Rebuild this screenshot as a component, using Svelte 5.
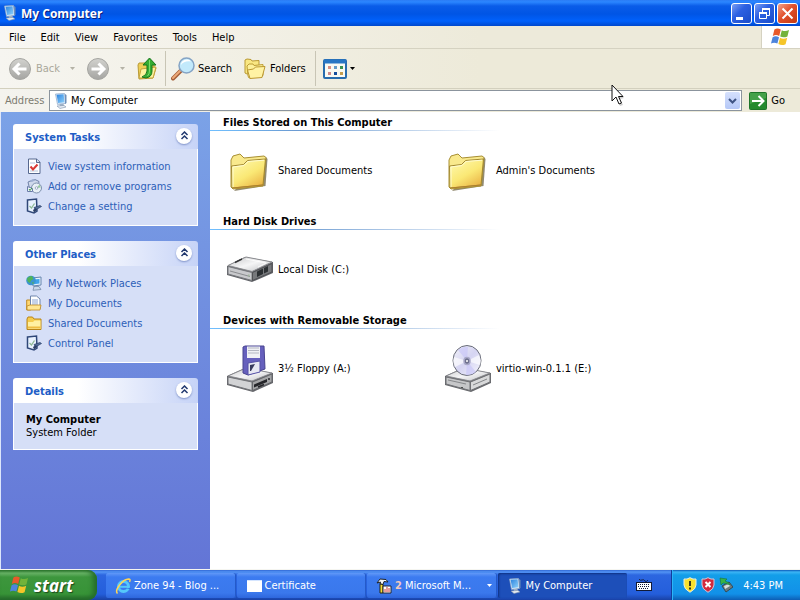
<script lang="ts">
	const menus = ['File', 'Edit', 'View', 'Favorites', 'Tools', 'Help'];

	const panels = [
		{
			title: 'System Tasks',
			links: [
				{ icon: 'info', label: 'View system information' },
				{ icon: 'programs', label: 'Add or remove programs' },
				{ icon: 'settings', label: 'Change a setting' }
			]
		},
		{
			title: 'Other Places',
			links: [
				{ icon: 'network', label: 'My Network Places' },
				{ icon: 'documents', label: 'My Documents' },
				{ icon: 'folder', label: 'Shared Documents' },
				{ icon: 'settings', label: 'Control Panel' }
			]
		},
		{ title: 'Details', links: [] }
	];

	const groups = [
		{
			title: 'Files Stored on This Computer',
			items: [
				{ icon: 'bigfolder', label: 'Shared Documents' },
				{ icon: 'bigfolder', label: "Admin's Documents" }
			]
		},
		{
			title: 'Hard Disk Drives',
			items: [{ icon: 'disk', label: 'Local Disk (C:)' }]
		},
		{
			title: 'Devices with Removable Storage',
			items: [
				{ icon: 'floppy', label: '3½ Floppy (A:)' },
				{ icon: 'cd', label: 'virtio-win-0.1.1 (E:)' }
			]
		}
	];

	const tasks = [
		{ icon: 'ie', label: 'Zone 94 - Blog ...' },
		{ icon: 'window', label: 'Certificate' },
		{ icon: 'tools', label: 'Microsoft M...', count: 2 },
		{ icon: 'computer', label: 'My Computer', active: true }
	];

	let address = $state('My Computer');
	let collapsed: Record<string, boolean> = $state({});

	const toggle = (title: string) => {
		collapsed[title] = !collapsed[title];
	};
</script>

{#snippet flag(size: number)}
	<svg width={size} height={size} viewBox="0 0 20 20" aria-hidden="true">
		<path d="M3.4 2.6q3-2 6.4 0L8.2 9q-3.2-1.8-6.4 0z" fill="#e8592a" />
		<path d="M10.8 3.2q3.4 1.8 7.2-.2L16.4 9.4q-3.6 1.8-7.2.2z" fill="#72b33a" />
		<path d="M1.6 10.2q3-1.8 6.4 0L6.4 16.6q-3.2-1.6-6.4 0z" fill="#4d84dc" />
		<path d="M9 10.8q3.4 1.8 7.2 0L14.6 17.2q-3.8 1.8-7.2-.2z" fill="#f5c529" />
	</svg>
{/snippet}

{#snippet icon16(name: string)}
	<svg class="icon16" width="16" height="16" viewBox="0 0 16 16" aria-hidden="true">
		{#if name === 'computer'}
			<path d="M2.5 1l9-.6 1 10-8 1z" fill="#dcebfa" stroke="#8ba5c6" stroke-width=".7" />
			<path d="M3.6 1.8l7-.5.8 8-6.300.8z" fill="url(#screen)" />
			<path d="M12 1l1.5 1v8L12 11z" fill="#6f8fb9" />
			<path d="M6.5 11h4l.5 2h-4z" fill="#9fb2c8" />
			<path d="M4 13l7-.6 2 1.6-6 1.5z" fill="#e6ecf3" stroke="#7d92ad" stroke-width=".6" />
		{:else if name === 'info'}
			<path d="M2.5 1h8L14 4v11.5H2.5z" fill="#fff" stroke="#56688f" />
			<path d="M10.5 1v3.5H14" fill="#d6e0f0" stroke="#56688f" />
			<path d="M4 5h5M4 13h8" stroke="#b7c5dd" />
			<path d="M4.5 8.5l2.5 3 4.500-5" fill="none" stroke="#d93a35" stroke-width="2" />
		{:else if name === 'programs'}
			<path d="M2 4l7-2.5 4 2-1 7-8 2z" fill="#cfd9ec" stroke="#7182a8" />
			<path d="M3 3l4-2 3 1-4 2z" fill="#9fb0d2" />
			<circle cx="10.5" cy="10" r="5" fill="#e8f0f6" stroke="#7d90ad" />
			<path d="M10.5 10l3-3.5 1.2 3z" fill="#96c9a0" />
			<circle cx="10.5" cy="10" r="1.3" fill="#fff" stroke="#7182a8" stroke-width=".6" />
			<path d="M1.5 8.5v5h5v-3z" fill="#eef3fb" stroke="#6a7ca8" />
			<path d="M3 11l1 1.5 2-2.5" fill="none" stroke="#399846" />
		{:else if name === 'settings'}
			<path d="M1.5 2l9-1 .5 12-3 2-6.5-2z" fill="#e9f2ff" stroke="#2f4778" stroke-width="1.5" />
			<path d="M3.5 8l2 2 3-4.500" fill="none" stroke="#8fba95" stroke-width="1.3" />
			<path d="M8 9.5l6-2 1.500 1-6 3.500z" fill="#567099" stroke="#263c68" stroke-width=".7" />
			<path d="M7 12l3-2 1 2-3 2.5z" fill="#2c3f66" />
		{:else if name === 'network'}
			<path d="M6 3l9-1v8l-8 1z" fill="#e5f1fc" stroke="#6785ad" />
			<path d="M7.5 4.5l6-.6v4.700l-5.500.7z" fill="#40a4eb" />
			<circle cx="5" cy="5.5" r="4.8" fill="#3c94d0" />
			<path d="M1 3.5q2-3 5-2.500l1.500 3L5 5.500 4 8Q1 7 1 3.500zM6 7l2 .5-1 2z" fill="#50b35a" />
			<path d="M8 11.5h5l2 3-8 .8z" fill="#cad8ea" stroke="#6b819f" stroke-width=".7" />
		{:else if name === 'documents'}
			<path d="M.7 5h4v10h-4z" fill="#ffd772" stroke="#c08a22" />
			<path d="M4.5 1h6L14 4v10H4.5z" fill="#fff" stroke="#6f85ad" />
			<path d="M6 5h6M6 7h6M6 9h6" stroke="#8aa4d5" />
			<path d="M1 14.5V11l3-1h11l-1 5H2z" fill="#ffe693" stroke="#c08a22" stroke-width=".8" />
		{:else if name === 'folder'}
			<path d="M1 4l1-2h4.5L8 4h7v10.5H1z" fill="#f5cc4e" stroke="#b98518" />
			<path d="M2 7h5l1.5-1.500h6V14H2z" fill="#fff0a1" />
			<path d="M2 12.5h12.500" stroke="#eebd43" stroke-width="2" />
		{:else if name === 'ie'}
			<circle cx="8.5" cy="8.5" r="5" fill="none" stroke="#55c8fa" stroke-width="3" />
			<path d="M5 8.8h8.500" stroke="#55c8fa" stroke-width="2" />
			<path d="M9.5 11h6v-1z" fill="#2c6be0" />
			<path d="M2.5 15.5C-1 12 8 1 13.500.9q2.500.1 1 3" fill="none" stroke="#ffd557" stroke-width="1.5" />
		{:else if name === 'window'}
			<path d="M1 2h15v12H1z" fill="#fff" />
			<path d="M1 2h15v1H1z" fill="#d5e5ff" />
		{:else if name === 'tools'}
			<path d="M1 5l3-4 6 .5 2 2.500-4-.5-1 3-3-.5.500-2z" fill="#f5f5f5" stroke="#1d222a" />
			<path d="M4 6l3 .5V15H4z" fill="#f7dd32" stroke="#242216" />
			<path d="M7 8h8v7H7z" fill="#fff" stroke="#22242c" />
			<path d="M9 14v-3M11 14V9M13 14v-4" stroke="#cd3a36" />
		{/if}
	</svg>
{/snippet}

{#snippet icon48(name: string)}
	<svg class="icon48" width="48" height="48" viewBox="0 0 48 48" aria-hidden="true">
		{#if name === 'bigfolder'}
			<path d="M40 10l1.500 2-2 27L8 44z" fill="#6e6340" opacity=".75" />
			<path d="M5 40V13l2-4 7-2 4 4 20-2 2 1.500L37 39 7 42z" fill="#f9e98d" stroke="#a88f33" />
			<path d="M6 41l-.5-22 12-1.500 4-4 18-1.500-2.500 26z" fill="url(#folder)" stroke="#a28832" />
			<path d="M7 40V20l11-1.500 4-4 16-1.300" fill="none" stroke="#fffbd0" />
			<path d="M7 41l30-3" stroke="#b0802c" />
		{:else if name === 'disk'}
			<path d="M1 20l18-9 28 5v11L26 36 1 29z" fill="#63656a" />
			<path d="M2 19.5L20 11l26 5-20 9.500z" fill="url(#metal)" stroke="#8b8c90" />
			<path d="M2 20.5l24 6v8L2 28z" fill="#c8c9cc" stroke="#77797d" />
			<path d="M26.5 26.500L46 17.500v8.500l-19.500 8.500z" fill="#77797c" stroke="#505155" />
			<path d="M31 25.500l6-3v5.500l-6 3zM38 22l4-2v5.500l-4 2z" fill="#2c3033" />
			<path d="M9 16.500l7-3.500" stroke="#353638" stroke-width="1.500" />
			<path d="M4 25l20 5.500" stroke="#8a8c8f" />
			<path d="M22 29.500h1.500" stroke="#9fb59c" stroke-width="2" />
			<path d="M20 13l20 4-8 4" fill="none" stroke="#fff" opacity=".8" />
		{:else if name === 'floppy'}
			<path d="M1 31l18-8 28 5v10L27 47 1 40z" fill="#64656a" />
			<path d="M2 31l18-8 26 5-20 8z" fill="url(#metal)" stroke="#8a8b90" />
			<path d="M2 32l24 5v8.500L2 39z" fill="#d2d3d5" stroke="#737579" />
			<path d="M26.5 37L46 29v8l-19.500 8.500z" fill="#a4a5a7" stroke="#66686c" />
			<path d="M28 39.500l13-5.500v3l-13 5.500z" fill="#25262a" />
			<path d="M32 42l6-2.500M43 33v2" stroke="#25262a" stroke-width="1.500" />
			<path d="M17 2l2-1h19l1 23-17 6-5-2z" fill="#6660bd" stroke="#49448f" />
			<path d="M21 1.500h13V13H21z" fill="#f0f1f5" />
			<path d="M22 3h11M22 5.500h11M22 8h11" stroke="#b5b8c2" />
			<path d="M22 18l12-2v11l-12 3z" fill="#e7e8f3" stroke="#5551a6" />
			<path d="M24 20l5-1-4 7h-1z" fill="#36395c" />
		{:else if name === 'cd'}
			<path d="M1 31l18-8 28 5v10L27 47 1 40z" fill="#66686c" />
			<path d="M2 31l18-8 26 5-20 8z" fill="url(#metal)" stroke="#8a8b90" />
			<path d="M2 32l24 5v8.500L2 39z" fill="#c6c7c9" stroke="#717276" />
			<path d="M26.5 37L46 29v8l-19.500 8.500z" fill="#d8d9da" stroke="#707175" />
			<path d="M4 35l18 4M29 40l14-6" stroke="#85878a" />
			<path d="M18 42v1" stroke="#4d504f" stroke-width="2" />
			<ellipse cx="23" cy="15.5" rx="14" ry="15" fill="url(#disc)" stroke="#686b77" />
			<path d="M23 16L14 5q5-4 10-3zM23 16l9 11q-5 4-10 3z" fill="#c7c4f7" opacity=".65" />
			<path d="M23 16l12-6q3 6 1 10zM23 16L11 22q-3-6-1-10z" fill="#fff" opacity=".65" />
			<ellipse cx="23" cy="16" rx="3" ry="3.5" fill="#6f718e" stroke="#a9a9c8" stroke-width="1.5" />
			<circle cx="23" cy="16" r="1" fill="#fff" />
		{/if}
	</svg>
{/snippet}

{#snippet caret(color: string)}
	<svg class="caret" width="5" height="3" viewBox="0 0 5 3" aria-hidden="true">
		<path d="M0 0h5L2.5 3z" fill={color} />
	</svg>
{/snippet}

{#snippet roundArrow(flip: boolean)}
	<svg width="24" height="24" viewBox="0 0 24 24" aria-hidden="true">
		<circle cx="12" cy="12" r="10.5" fill="url(#disabled)" stroke="#a5a5a1" />
		<path
			d={flip ? 'M5.500 12h12M12.500 6.500L18 12l-5.500 5.500' : 'M18.500 12h-12M11.500 6.500L6 12l5.500 5.500'}
			fill="none"
			stroke="#fff"
			stroke-width="3"
		/>
	</svg>
{/snippet}

<!-- Shared gradients for the icons -->
<svg class="defs" width="0" height="0" aria-hidden="true">
	<defs>
		<linearGradient id="screen" x1="0" y1="0" x2="1" y2="1">
			<stop offset="0" stop-color="#2c83df" />
			<stop offset="1" stop-color="#8fd2fb" />
		</linearGradient>
		<linearGradient id="folder" x1="0" y1="0" x2=".7" y2="1">
			<stop offset="0" stop-color="#fffbb5" />
			<stop offset=".6" stop-color="#fae875" />
			<stop offset="1" stop-color="#ebb748" />
		</linearGradient>
		<linearGradient id="metal" x1="0" y1="0" x2="1" y2="1">
			<stop offset="0" stop-color="#c5c6c8" />
			<stop offset=".5" stop-color="#f5f5f6" />
			<stop offset="1" stop-color="#bdbfc2" />
		</linearGradient>
		<linearGradient id="disc" x1="0" y1="0" x2="1" y2="1">
			<stop offset="0" stop-color="#f2f2f8" />
			<stop offset=".5" stop-color="#d5d4f2" />
			<stop offset="1" stop-color="#f5f5fc" />
		</linearGradient>
		<linearGradient id="disabled" x1="0" y1="0" x2="0" y2="1">
			<stop offset="0" stop-color="#d2d2ce" />
			<stop offset="1" stop-color="#a5a5a2" />
		</linearGradient>
	</defs>
</svg>

<div class="desktop">
	<header class="titlebar">
		{@render icon16('computer')}
		<h1>My Computer</h1>
		<div class="window-buttons">
			<button type="button" aria-label="Minimize">
				<svg width="19" height="19" viewBox="0 0 19 19"><path d="M4 13h7v3H4z" fill="#fff" /></svg>
			</button>
			<button type="button" aria-label="Restore">
				<svg width="19" height="19" viewBox="0 0 19 19" fill="none" stroke="#fff">
					<path d="M7.5 8V4.500h7v7H12" /><path d="M7 5h8" stroke-width="2" />
					<path d="M4.5 8.500h7v6h-7z" /><path d="M4 9h8" stroke-width="2" />
				</svg>
			</button>
			<button type="button" class="close" aria-label="Close">
				<svg width="19" height="19" viewBox="0 0 19 19">
					<path d="M4.5 4.500l10 10M14.500 4.500l-10 10" stroke="#fff" stroke-width="2" />
				</svg>
			</button>
		</div>
	</header>

	<nav class="menubar">
		{#each menus as menu}
			<button type="button">{menu}</button>
		{/each}
		<div class="brand">{@render flag(20)}</div>
	</nav>

	<div class="toolbar">
		<button type="button" class="nav-button" disabled>
			{@render roundArrow(false)}
			<span>Back</span>
			{@render caret('#b4b2a6')}
		</button>
		<button type="button" class="nav-button forward" disabled aria-label="Forward">
			{@render roundArrow(true)}
			{@render caret('#b4b2a6')}
		</button>
		<button type="button" class="up" aria-label="Up">
			<svg width="20" height="24" viewBox="0 0 20 24">
				<path d="M1 8l1-2h6l1 2 8-1v3l2 1-3 10-14 1z" fill="#efcf55" stroke="#b89a35" />
				<path d="M2 21l2-9 15-2-3 11z" fill="#fdf3a0" stroke="#c5a43d" />
				<path d="M5 20q5-2 5-6V8H6l6.500-7L19 8h-4v6q0 6-6 7z" fill="#35ad32" stroke="#16771b" />
				<path d="M12.5 3v11q0 3-2 5" fill="none" stroke="#80da68" />
			</svg>
		</button>
		<span class="divider"></span>
		<button type="button" class="search">
			<svg width="24" height="24" viewBox="0 0 24 24" aria-hidden="true">
				<path d="M2 21.500l8-8" stroke="#a45d37" stroke-width="4" stroke-linecap="round" />
				<path d="M2 21l7-7" stroke="#eeaa79" stroke-width="2" stroke-linecap="round" />
				<circle cx="15.5" cy="8.5" r="7.5" fill="#c2e9fb" stroke="#85a4c5" stroke-width="1.5" />
				<path d="M10 8q0-5 6-5.500 3 0 4 2-7-1-10 3.500z" fill="#fff" />
			</svg>
			<span>Search</span>
		</button>
		<button type="button" class="folders">
			<svg width="22" height="22" viewBox="0 0 22 22" aria-hidden="true">
				<path d="M1 15V2l2-1 4 .5 1 1.500 7-.5V13L3 16z" fill="#f9e782" stroke="#b99932" />
				<path d="M4 18L3 8l2-2h4l1 1.500 9-1v11L5 20z" fill="#fdf19a" stroke="#bd9e36" />
				<path d="M6 20.500L3.500 12l6-1 2-2 9.500-.5-3 11z" fill="#fff3a4" stroke="#bc9831" />
			</svg>
			<span>Folders</span>
		</button>
		<span class="divider"></span>
		<button type="button" class="views" aria-label="Views">
			<svg width="24" height="20" viewBox="0 0 24 20">
				<rect x="1" y="1" width="22" height="18" rx="1" fill="#fafaf3" stroke="#286cae" stroke-width="2" />
				<path d="M1 2.500h22" stroke="#2876c4" stroke-width="4" />
				<path d="M5 7h3v3H5z" fill="#d98e83" /><path d="M11 7h3v3h-3z" fill="#669cc9" />
				<path d="M17 7h3v3h-3z" fill="#3a9150" /><path d="M5 13h3v3H5z" fill="#ce8889" />
				<path d="M11 13h3v3h-3z" fill="#174e9d" /><path d="M17 13h3v3h-3z" fill="#c49d4e" />
			</svg>
			{@render caret('#000')}
		</button>
	</div>

	<form class="addressbar" onsubmit={(event) => event.preventDefault()}>
		<label for="address">Address</label>
		<div class="address-box">
			{@render icon16('computer')}
			<input id="address" type="text" bind:value={address} />
			<button type="button" class="drop" aria-label="Show addresses">
				<svg width="9" height="6" viewBox="0 0 9 6">
					<path d="M1 1l3.500 3.500L8 1" fill="none" stroke="#3f5483" stroke-width="2" />
				</svg>
			</button>
		</div>
		<button type="submit" class="go">
			<svg width="18" height="18" viewBox="0 0 18 18" aria-hidden="true">
				<rect x=".5" y=".5" width="17" height="17" rx="1" fill="#258a2e" stroke="#1f7529" />
				<path d="M1 1h16v5L1 12z" fill="#5cb15c" opacity=".6" />
				<path d="M3 9h11M9.500 4l5 5-5 5" fill="none" stroke="#fff" stroke-width="2" />
			</svg>
			<span>Go</span>
		</button>
	</form>

	<div class="explorer">
		<aside class="sidebar">
			{#each panels as panel}
				<section class="panel">
					<div class="panel-header">
						<h2>{panel.title}</h2>
						<button type="button" aria-label="Toggle {panel.title}" onclick={() => toggle(panel.title)}>
							<svg width="9" height="9" viewBox="0 0 9 9">
								<path
									d="M1.5 4l3-3 3 3M1.500 8l3-3 3 3"
									fill="none"
									stroke="#22396f"
									stroke-width="1.5"
								/>
							</svg>
						</button>
					</div>
					{#if !collapsed[panel.title]}
						{#if panel.links.length}
							<ul class="panel-body">
								{#each panel.links as link}
									<li>
										<a href="#{link.icon}">{@render icon16(link.icon)}<span>{link.label}</span></a>
									</li>
								{/each}
							</ul>
						{:else}
							<div class="panel-body details">
								<strong>My Computer</strong>
								<p>System Folder</p>
							</div>
						{/if}
					{/if}
				</section>
			{/each}
		</aside>

		<main class="content">
			{#each groups as group}
				<section class="group">
					<h2>{group.title}</h2>
					<div class="rule"></div>
					<div class="items">
						{#each group.items as item}
							<button type="button">{@render icon48(item.icon)}<span>{item.label}</span></button>
						{/each}
					</div>
				</section>
			{/each}
		</main>
	</div>

	<footer class="taskbar">
		<button type="button" class="start">{@render flag(20)}<span>start</span></button>
		<div class="tasks">
			{#each tasks as task}
				<button type="button" class="task" class:active={task.active}>
					{@render icon16(task.icon)}
					{#if task.count}<b>{task.count}</b>{/if}
					<span>{task.label}</span>
					{#if task.count}{@render caret('#fff')}{/if}
				</button>
			{/each}
		</div>
		<button type="button" class="keyboard" aria-label="Keyboard">
			<svg width="16" height="14" viewBox="0 0 16 14">
				<path d="M3 1q1 2 3 1t3 1 3-1" fill="none" stroke="#17254c" />
				<rect x=".5" y="4.5" width="15" height="8" fill="#fff" stroke="#111a36" />
				<path d="M2 6.500h12M2 8.500h12M3 10.500h10" stroke="#111a36" stroke-dasharray="1 1" />
			</svg>
		</button>
		<div class="tray">
			<svg width="14" height="16" viewBox="0 0 14 16" aria-hidden="true">
				<path d="M7 .7q3 2 6 1.300v6q0 4-6 7.300Q1 12 1 8V2q3 .7 6-1.300z" fill="#fae12e" stroke="#e9eee4" />
				<path d="M7 4v5M7 10.500v2" stroke="#3c391b" stroke-width="2" />
			</svg>
			<svg width="14" height="16" viewBox="0 0 14 16" aria-hidden="true">
				<path d="M7 .7q3 2 6 1.300v6q0 4-6 7.300Q1 12 1 8V2q3 .7 6-1.300z" fill="#d2293d" stroke="#cfc8dc" />
				<path d="M4.5 5l5 5M9.500 5l-5 5" stroke="#fff" stroke-width="2" />
			</svg>
			<svg width="14" height="16" viewBox="0 0 14 16" aria-hidden="true">
				<path d="M3 9l7-4 4 5-7 5z" fill="#707b7c" stroke="#344a56" />
				<path d="M5 9l5-2 1 2-5 3z" fill="#d9dfdb" />
				<path d="M1 1l7 1-2 2q4 1 5 4-4-2-7-2L2 8z" fill="#38b346" stroke="#18743b" stroke-width=".6" />
			</svg>
			<time>4:43 PM</time>
		</div>
	</footer>

	<svg class="pointer" width="14" height="23" viewBox="0 0 14 23" aria-hidden="true">
		<path d="M3 4l10 10-4 1 3 6-3 1z" fill="#777" opacity=".35" />
		<path d="M1 1v16l4-4 3 7 2.500-1-3-6.500H12z" fill="#fff" stroke="#111" />
	</svg>
</div>

<style>
	:global(body) {
		margin: 0;
	}

	.desktop {
		position: relative;
		display: flex;
		flex-direction: column;
		min-height: 100vh;
		background: #fff;
		color: #000;
		font-family: 'DejaVu Sans Condensed', 'DejaVu Sans', sans-serif;
		font-size: 11px;
		line-height: 13px;
	}

	.defs {
		position: absolute;
	}

	svg {
		display: block;
		flex: none;
	}

	button,
	input {
		margin: 0;
		padding: 0;
		border: 0;
		background: none;
		color: inherit;
		font: inherit;
	}

	button {
		display: flex;
		align-items: center;
		white-space: nowrap;
	}

	h1,
	h2,
	p,
	ul {
		margin: 0;
		padding: 0;
		font-size: 11px;
	}

	/* Title bar */
	.titlebar {
		display: flex;
		align-items: center;
		gap: 3px;
		box-sizing: border-box;
		height: 26px;
		padding: 0 2px;
		background: linear-gradient(#2c7cf5 0, #2b86ff 2px, #0a5ce8 6px, #0055e5 14px, #0061fc 21px, #0048cc 26px);
	}

	.titlebar h1 {
		flex: 1;
		color: #fff;
		font-family: 'Open Sans', sans-serif;
		font-size: 12px;
		text-shadow: 1px 1px #0a1f7b;
	}

	.window-buttons {
		display: flex;
		gap: 2px;
	}

	.window-buttons button {
		box-sizing: border-box;
		width: 21px;
		height: 21px;
		border: 1px solid #fff;
		border-radius: 3px;
		background: linear-gradient(135deg, #7c9ff4, #2d61e2 40%, #1a4cc9);
	}

	.window-buttons .close {
		background: linear-gradient(135deg, #f0a28b, #e2502b 45%, #c23a12);
	}

	/* Menu */
	.menubar {
		display: flex;
		align-items: stretch;
		gap: 15px;
		height: 22px;
		padding-left: 9px;
		border-bottom: 1px solid #d5d2c1;
		background: linear-gradient(90deg, #f8f7f3, #edeada 60%);
	}

	.brand {
		display: flex;
		align-items: center;
		justify-content: center;
		width: 38px;
		margin-left: auto;
		border-left: 1px solid #d5d2c1;
		background: #fff;
	}

	/* Toolbar */
	.toolbar {
		display: flex;
		align-items: center;
		height: 39px;
		padding-left: 8px;
		border-bottom: 1px solid #d3d0be;
		background: linear-gradient(90deg, #f6f5f0, #edead9 60%);
	}

	.nav-button {
		gap: 10px;
		color: #aaa89b;
	}

	.nav-button span {
		margin-left: -6px;
	}

	.forward {
		margin-left: 11px;
	}

	.up {
		margin: 0 8px 0 12px;
	}

	.divider {
		align-self: stretch;
		width: 1px;
		margin: 2px 0;
		background: #c8c5b5;
	}

	.search {
		gap: 3px;
		margin-left: 5px;
	}

	.folders {
		gap: 4px;
		margin: 0 9px 0 12px;
	}

	.views {
		gap: 3px;
		margin-left: 7px;
	}

	/* Address */
	.addressbar {
		display: flex;
		align-items: center;
		height: 23px;
		padding: 0 15px 0 5px;
		background: linear-gradient(90deg, #f4f3ee, #edead9 60%);
	}

	.addressbar label {
		width: 44px;
		color: #7d7b70;
	}

	.address-box {
		display: flex;
		flex: 1;
		align-items: center;
		gap: 2px;
		height: 19px;
		padding-left: 3px;
		border: 1px solid #8b949d;
		background: #fff;
	}

	.address-box input {
		flex: 1;
		min-width: 0;
		outline: none;
	}

	.drop {
		justify-content: center;
		width: 15px;
		height: 17px;
		margin-right: 1px;
		border-radius: 2px;
		background: linear-gradient(#d5e0fc, #b5c8f7);
	}

	.go {
		gap: 4px;
		margin-left: 7px;
	}

	/* Explorer */
	.explorer {
		display: flex;
		flex: 1;
		border-bottom: 1px solid #f5f5f0;
	}

	.sidebar {
		display: flex;
		flex: none;
		flex-direction: column;
		gap: 15px;
		box-sizing: border-box;
		width: 210px;
		padding: 12px;
		border-left: 1px solid #dce6fb;
		background: linear-gradient(#7ba2e7, #6375d6);
	}

	.panel-header {
		display: flex;
		align-items: center;
		justify-content: space-between;
		height: 25px;
		padding: 0 6px 0 12px;
		border-radius: 3px 3px 0 0;
		background: linear-gradient(90deg, #fff 35%, #c6d3f7);
	}

	.panel-header h2 {
		padding-top: 2px;
		color: #215dc6;
	}

	.panel-header button {
		justify-content: center;
		width: 16px;
		height: 16px;
		margin-bottom: 2px;
		border-radius: 50%;
		background: #fff;
		box-shadow: 0 1px 2px #7f92c8;
	}

	.panel-body {
		padding: 7px 12px 9px;
		border: 1px solid #fff;
		border-top: 0;
		background: #d6dff7;
		list-style: none;
	}

	.panel-body a {
		display: flex;
		align-items: center;
		gap: 6px;
		height: 20px;
		color: #2d60b8;
		text-decoration: none;
	}

	.panel-body a:hover {
		text-decoration: underline;
	}

	.details {
		padding: 10px 12px;
	}

	.content {
		flex: 1;
		min-width: 0;
	}

	.group h2 {
		height: 14px;
		padding: 4px 0 0 13px;
	}

	.rule {
		width: 290px;
		height: 1px;
		background: linear-gradient(90deg, #70bfff, #6c9bd2 30%, #fff);
	}

	.items {
		display: grid;
		grid-template-columns: repeat(auto-fill, 218px);
		padding: 16px;
	}

	.items button {
		gap: 4px;
		text-align: left;
	}

	.items span {
		padding-bottom: 2px;
	}

	/* Taskbar */
	.taskbar {
		display: flex;
		align-items: stretch;
		height: 30px;
		color: #fff;
		background: linear-gradient(#3168d5 0, #5394f5 2px, #2c66e0 5px, #245edb 24px, #1941a5 30px);
	}

	.start {
		gap: 4px;
		box-sizing: border-box;
		width: 97px;
		padding-left: 10px;
		border-radius: 0 9px 9px 0;
		background: linear-gradient(#2f7a2f 0, #6cb76a 3px, #3d963d 7px, #379337 24px, #22662a 30px);
		box-shadow: inset -4px 0 5px #256d2a;
		font-family: 'Open Sans', sans-serif;
		font-size: 17px;
		font-style: italic;
		font-weight: bold;
		text-shadow: 1px 1px 1px #1c4a1c;
	}

	.tasks {
		display: flex;
		flex: 1;
		gap: 1px;
		padding: 3px 9px 2px;
	}

	.task {
		flex: 1;
		gap: 3px;
		min-width: 0;
		max-width: 130px;
		padding: 0 5px 0 9px;
		box-sizing: border-box;
		border-radius: 2px;
		background: linear-gradient(#6199f8 0, #3c7bf0 4px, #3a78ec 20px, #2e66dc);
		box-shadow: inset -1px 0 #245ac9;
	}

	.task.active {
		background: #1d4fb9;
		box-shadow: inset 1px 1px 2px #0f3282;
	}

	.task b {
		color: #f2c9bd;
	}

	.task .caret {
		margin-left: auto;
	}

	.keyboard {
		margin-right: 19px;
	}

	.tray {
		display: flex;
		align-items: center;
		gap: 4px;
		padding: 0 17px 0 11px;
		border-left: 1px solid #123e9c;
		background: linear-gradient(#0c59b9 0, #3cb5f5 2px, #139ee9 5px, #1290e8 24px, #0d5eb5 30px);
		box-shadow: inset 1px 0 #2bb5f8;
	}

	.tray time {
		margin-left: 6px;
	}

	.pointer {
		position: absolute;
		top: 84px;
		left: 611px;
		pointer-events: none;
	}
</style>
